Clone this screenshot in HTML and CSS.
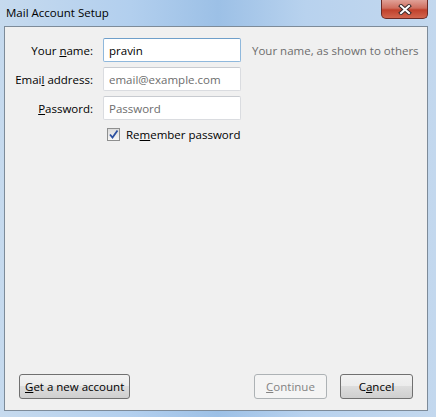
FILE: index.html
```html
<!DOCTYPE html>
<html lang="en">
<head>
  <meta charset="UTF-8" />
  <title>Mail Account Setup</title>
  <link rel="stylesheet" href="styles.css">
</head>
<body>
  <div class="window">
    <div class="titlebar">
      <span class="title">Mail Account Setup</span>
      <button class="close" title="Close">
        <svg width="14" height="11" viewBox="0 0 14 11">
          <path d="M3 2 L11 9 M11 2 L3 9" stroke="#3a2a2a" stroke-width="4" stroke-linecap="square"/>
          <path d="M3 2 L11 9 M11 2 L3 9" stroke="#fff" stroke-width="2" stroke-linecap="square"/>
        </svg>
      </button>
    </div>

    <div class="frame">
      <div class="panel">
        <div class="form">
          <label class="lbl" for="realname">Your <u>n</u>ame:</label>
          <input class="field focused" id="realname" type="text" value="pravin">
          <span class="hint">Your name, as shown to others</span>

          <label class="lbl" for="email">Emai<u>l</u> address:</label>
          <input class="field" id="email" type="text" placeholder="email@example.com">
          <span></span>

          <label class="lbl" for="password"><u>P</u>assword:</label>
          <input class="field" id="password" type="text" placeholder="Password">
          <span></span>

          <span></span>
          <label class="remember">
            <span class="check">
              <svg width="11" height="11" viewBox="0 0 11 11">
                <path d="M2 5.5 L4.5 8.5 L9.5 1.5" fill="none" stroke="#2b4fa0" stroke-width="1.8"/>
              </svg>
            </span>
            <span>Re<u>m</u>ember password</span>
          </label>
          <span></span>
        </div>

        <div class="footer">
          <button class="btn"><u>G</u>et a new account</button>
          <div class="spacer"></div>
          <button class="btn disabled"><u>C</u>ontinue</button>
          <button class="btn">C<u>a</u>ncel</button>
        </div>
      </div>
    </div>
  </div>
</body>
</html>
```

FILE: styles.css
```css
body {
  margin: 0;
  font-family: "Open Sans", "Noto Sans", Arial, sans-serif;
  font-size: 11.5px;
  color: #000;
}
.window {
  width: 436px;
  height: 417px;
  display: flex;
  flex-direction: column;
  background: linear-gradient(90deg, #c6daee 0%, #b2cfee 30%, #9cc0e6 50%, #b8d2ee 70%, #c3d8ee 100%);
}
.titlebar {
  height: 26px;
  display: flex;
  align-items: flex-start;
  justify-content: space-between;
}
.title {
  padding: 5px 0 0 6px;
  color: #000;
}
.close {
  width: 47px;
  height: 19px;
  margin-right: 8px;
  padding: 0;
  border: 1px solid #6b2b26;
  border-top: none;
  border-radius: 0 0 5px 5px;
  background: linear-gradient(180deg, #e0a197 0%, #cf6e5e 45%, #c0412c 55%, #d2654e 100%);
  display: flex;
  align-items: center;
  justify-content: center;
}
.frame {
  flex: 1;
  display: flex;
  padding: 0 8px 6px 4px;
}
.panel {
  flex: 1;
  display: flex;
  flex-direction: column;
  background: #f0f0f0;
  border: 1px solid #7d8b99;
}
.form {
  display: grid;
  grid-template-columns: 88px 138px auto;
  grid-template-rows: 24px 24px 24px 18px;
  column-gap: 10px;
  row-gap: 5px;
  padding-top: 11px;
  align-items: center;
}
.lbl {
  text-align: right;
}
.field {
  box-sizing: border-box;
  width: 138px;
  height: 24px;
  margin: 0;
  padding: 0 5px;
  font: inherit;
  color: #000;
  background: #fff;
  border: 1px solid #dadce0;
  border-top-color: #c8cbd0;
  border-radius: 2px;
  outline: none;
}
.field::placeholder {
  color: #6d6d6d;
}
.field.focused {
  border-color: #8fb8dc;
  border-top-color: #6f9fca;
}
.hint {
  margin-left: 1px;
  color: #6d6d6d;
  white-space: nowrap;
}
.remember {
  display: flex;
  align-items: center;
  gap: 6px;
  padding-left: 4px;
  white-space: nowrap;
}
.check {
  box-sizing: border-box;
  width: 13px;
  height: 13px;
  border: 1px solid #8e8f8f;
  background: linear-gradient(180deg, #dcdcdc, #f6f6f6);
  display: flex;
  align-items: center;
  justify-content: center;
}
.footer {
  margin-top: auto;
  display: flex;
  gap: 13px;
  padding: 0 14px 11px 14px;
}
.spacer {
  flex: 1;
}
.btn {
  box-sizing: border-box;
  height: 25px;
  min-width: 73px;
  padding: 0 5px;
  font: inherit;
  color: #000;
  border: 1px solid #707070;
  border-radius: 3px;
  background: linear-gradient(180deg, #f2f2f2 0%, #ebebeb 50%, #dddddd 50%, #cfcfcf 100%);
}
.btn.disabled {
  color: #838383;
  border-color: #adb2b5;
  background: #f4f4f4;
}
```
